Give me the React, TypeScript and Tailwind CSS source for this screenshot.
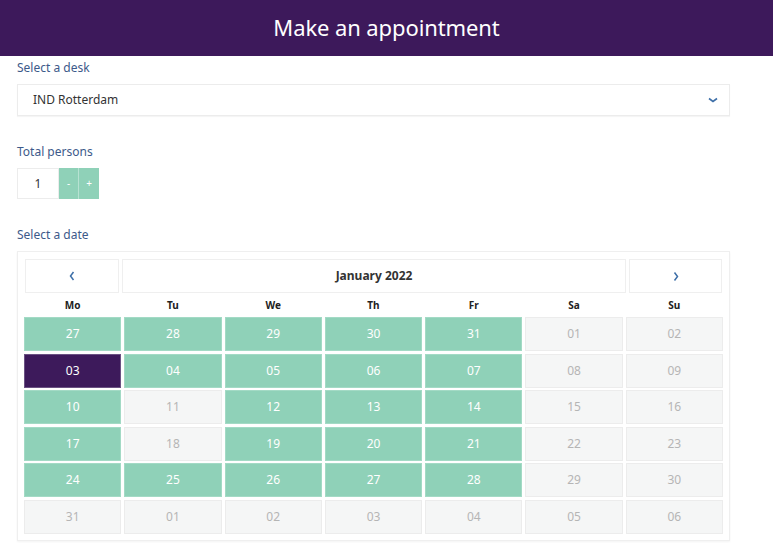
import React, { useState } from 'react';

type Day = { label: string; state: 'open' | 'closed' | 'selected' };

const open = (l: string): Day => ({ label: l, state: 'open' });
const closed = (l: string): Day => ({ label: l, state: 'closed' });

const weeks: Day[][] = [
    [open('27'), open('28'), open('29'), open('30'), open('31'), closed('01'), closed('02')],
    [{ label: '03', state: 'selected' }, open('04'), open('05'), open('06'), open('07'), closed('08'), closed('09')],
    [open('10'), closed('11'), open('12'), open('13'), open('14'), closed('15'), closed('16')],
    [open('17'), closed('18'), open('19'), open('20'), open('21'), closed('22'), closed('23')],
    [open('24'), open('25'), open('26'), open('27'), open('28'), closed('29'), closed('30')],
    [closed('31'), closed('01'), closed('02'), closed('03'), closed('04'), closed('05'), closed('06')],
];

const weekdays = ['Mo', 'Tu', 'We', 'Th', 'Fr', 'Sa', 'Su'];

const dayClass: Record<Day['state'], string> = {
    open: 'bg-[#8fd1b8] border-[#a3dac5] text-white',
    closed: 'bg-[#f5f6f6] border-[#ececec] text-[#b5b5b5]',
    selected: 'bg-[#3d1a5b] border-[#6b5283] text-white',
};

const App: React.FC = () => {
    const [persons, setPersons] = useState(1);

    return (
        <div className="min-h-screen bg-white font-['Noto_Sans','Open_Sans',sans-serif] text-[#333]">
            <header className="h-[56px] bg-[#3d195b] flex items-center justify-center">
                <h1 className="text-[22px] text-white tracking-[-0.1px] pb-[2px]">Make an appointment</h1>
            </header>

            <div className="w-[713px] ml-[17px]">
                <label className="block text-[12px] text-[#3d5a8a] mt-[3px] leading-[18px]">Select a desk</label>
                <div className="mt-[7px] h-[32px] border border-[#ececec] flex items-center justify-between pl-[15px] pr-[10px] shadow-[0_1px_1px_rgba(0,0,0,0.04)]">
                    <span className="text-[12px] text-[#333]">IND Rotterdam</span>
                    <svg width="12" height="8" viewBox="0 0 12 8" className="text-[#3d6fa8]">
                        <path d="M2 2.5 L6 5.5 L10 2.5" fill="none" stroke="currentColor" strokeWidth="1.6" />
                    </svg>
                </div>

                <label className="block text-[12px] text-[#3d5a8a] mt-[27px] leading-[18px]">Total persons</label>
                <div className="mt-[7px] flex h-[31px]">
                    <div className="w-[42px] border border-[#ececec] flex items-center justify-center text-[12px] text-[#333]">
                        {persons}
                    </div>
                    <button
                        className="w-[20px] bg-[#8fd1b8] text-white text-[10px] border-r border-[#b7e2d2]"
                        onClick={() => setPersons(Math.max(1, persons - 1))}
                    >
                        -
                    </button>
                    <button
                        className="w-[20px] bg-[#8fd1b8] text-white text-[10px]"
                        onClick={() => setPersons(persons + 1)}
                    >
                        +
                    </button>
                </div>

                <label className="block text-[12px] text-[#3d5a8a] mt-[27px] leading-[18px]">Select a date</label>
                <div className="mt-[7px] border border-[#efefef] px-[6px] pt-[7px] pb-[6px] shadow-[0_1px_2px_rgba(0,0,0,0.05)]">
                    <div className="flex gap-[3px] h-[34px] px-[1px]">
                        <button className="w-[94px] border border-[#efefef] flex items-center justify-center text-[#3d6fa8]">
                            <svg width="8" height="12" viewBox="0 0 8 12">
                                <path d="M5.5 2 L2.5 6 L5.5 10" fill="none" stroke="currentColor" strokeWidth="1.5" />
                            </svg>
                        </button>
                        <div className="flex-1 border border-[#efefef] flex items-center justify-center text-[12px] font-bold text-[#333]">
                            January 2022
                        </div>
                        <button className="w-[93px] border border-[#efefef] flex items-center justify-center text-[#3d6fa8]">
                            <svg width="8" height="12" viewBox="0 0 8 12">
                                <path d="M2.5 2.5 L5.5 6.5 L2.5 10.5" fill="none" stroke="currentColor" strokeWidth="1.5" />
                            </svg>
                        </button>
                    </div>

                    <div className="grid grid-cols-7 gap-x-[3px] mt-[1px]">
                        {weekdays.map(w => (
                            <div key={w} className="h-[22px] flex items-center justify-center text-[10px] font-bold text-[#222]">
                                {w}
                            </div>
                        ))}
                    </div>

                    <div className="grid grid-cols-7 gap-x-[3px] gap-y-[2.6px] mt-[1px]">
                        {weeks.flat().map((d, i) => (
                            <div
                                key={i}
                                className={`h-[34px] border flex items-center justify-center text-[12px] ${dayClass[d.state]}`}
                            >
                                {d.label}
                            </div>
                        ))}
                    </div>
                </div>
            </div>
        </div>
    );
};

export default App;
